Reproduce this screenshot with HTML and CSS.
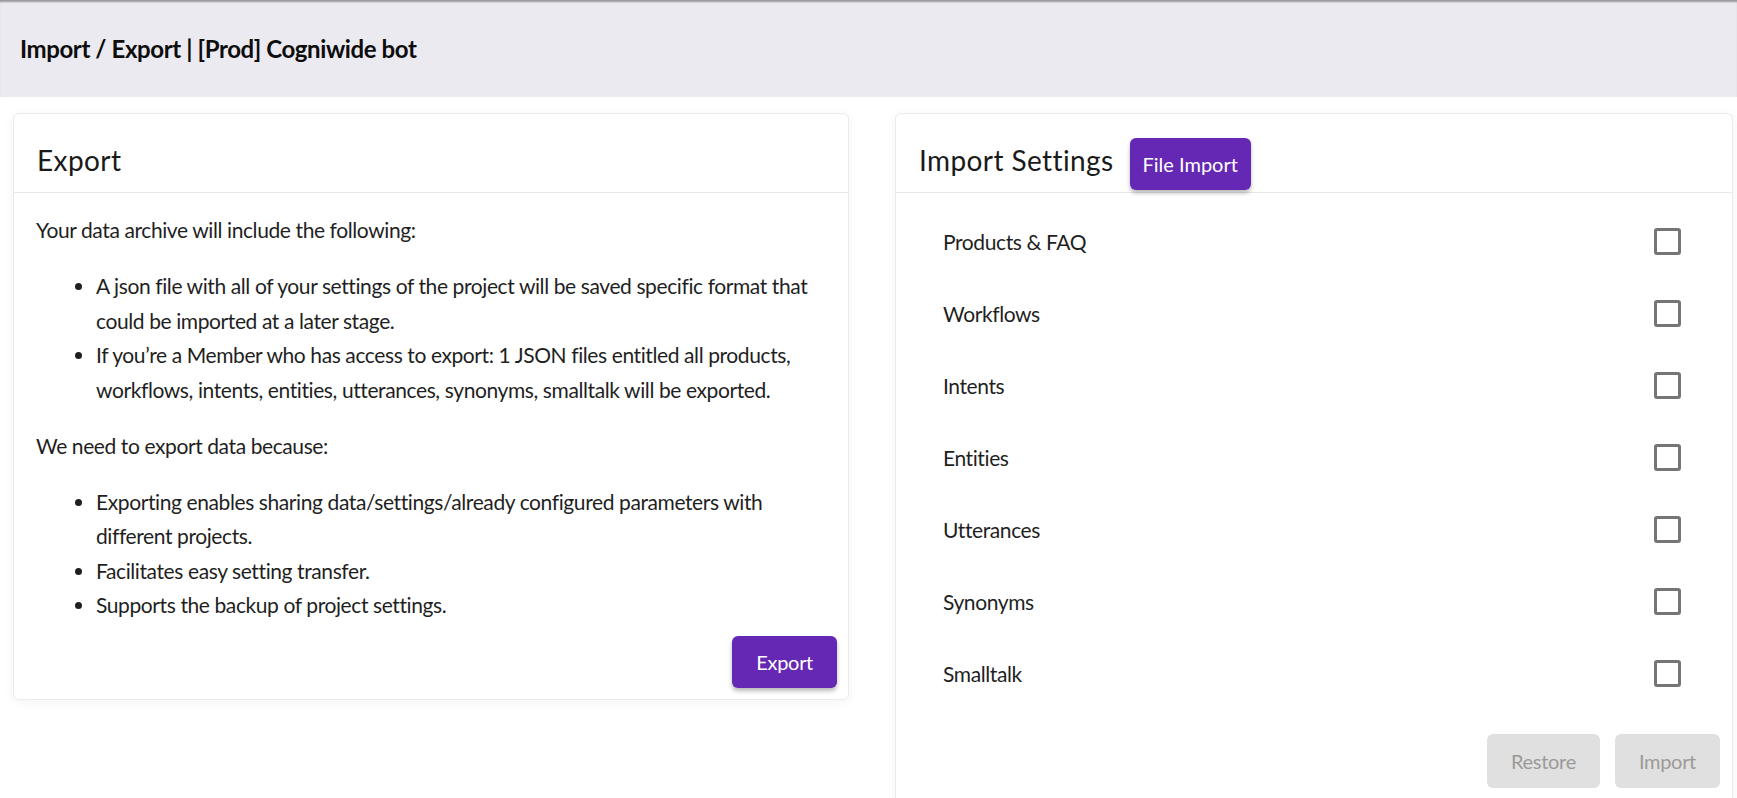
FILE: index.html
```html
<!DOCTYPE html>
<html lang="en">
<head>
<meta charset="utf-8">
<title>Import / Export</title>
<link rel="stylesheet" href="styles.css">
</head>
<body>
<header class="topbar">
  <h1 class="page-title">Import / Export | [Prod] Cogniwide bot</h1>
</header>
<main class="content">
  <section class="card card-export">
    <div class="card-header">
      <h2 class="card-title">Export</h2>
    </div>
    <div class="card-body">
      <p class="para">Your data archive will include the following:</p>
      <ul class="list">
        <li>A json file with all of your settings of the project will be saved specific format that could be imported at a later stage.</li>
        <li>If you’re a Member who has access to export: 1 JSON files entitled all products, workflows, intents, entities, utterances, synonyms, smalltalk will be exported.</li>
      </ul>
      <p class="para">We need to export data because:</p>
      <ul class="list list-last">
        <li>Exporting enables sharing data/settings/already configured parameters with different projects.</li>
        <li>Facilitates easy setting transfer.</li>
        <li>Supports the backup of project settings.</li>
      </ul>
      <div class="actions actions-export">
        <button class="btn btn-primary">Export</button>
      </div>
    </div>
  </section>
  <section class="card card-import">
    <div class="card-header">
      <h2 class="card-title">Import Settings</h2>
      <button class="btn btn-primary btn-file">File Import</button>
    </div>
    <ul class="options">
      <li class="option"><span class="option-label">Products &amp; FAQ</span><span class="checkbox"></span></li>
      <li class="option"><span class="option-label">Workflows</span><span class="checkbox"></span></li>
      <li class="option"><span class="option-label">Intents</span><span class="checkbox"></span></li>
      <li class="option"><span class="option-label">Entities</span><span class="checkbox"></span></li>
      <li class="option"><span class="option-label">Utterances</span><span class="checkbox"></span></li>
      <li class="option"><span class="option-label">Synonyms</span><span class="checkbox"></span></li>
      <li class="option"><span class="option-label">Smalltalk</span><span class="checkbox"></span></li>
    </ul>
    <div class="actions actions-import">
      <button class="btn btn-disabled">Restore</button>
      <button class="btn btn-disabled">Import</button>
    </div>
  </section>
</main>
</body>
</html>
```
FILE: styles.css
```css
* { box-sizing: border-box; }

html, body {
  margin: 0;
  padding: 0;
  background: #ffffff;
  overflow: hidden;
}

body {
  font-family: Lato, "Liberation Sans", sans-serif;
  color: #1f1f1f;
}

.topbar {
  height: 97px;
  background: #ebeaf0;
  display: flex;
  align-items: center;
  padding-left: 20px;
  box-shadow: inset 0 3px 2px -1px rgba(0, 0, 0, 0.35);
}

.page-title {
  margin: 0;
  font-size: 24px;
  font-weight: 700;
  letter-spacing: -0.4px;
  color: #0d0d0d;
}

.content {
  display: flex;
  align-items: flex-start;
  gap: 46px;
  padding: 16px 0 0 13px;
}

.card {
  background: #fff;
  border: 1px solid #ebebeb;
  border-radius: 6px;
  box-shadow: 0 2px 12px rgba(0, 0, 0, 0.05);
}

.card-export {
  width: 836px;
  height: 587px;
}

.card-import {
  width: 838px;
  height: 700px;
}

.card-header {
  height: 79px;
  display: flex;
  align-items: flex-end;
  gap: 16px;
  padding: 0 23px;
  border-bottom: 1px solid #e8e8e8;
}

.card-title {
  margin: 0 0 18px;
  font-size: 28px;
  line-height: 28px;
  font-weight: 400;
  letter-spacing: 0.4px;
  color: #1a1a1a;
}

.card-body {
  padding: 20px 11px 0 22px;
  font-size: 21px;
  letter-spacing: -0.4px;
  line-height: 34.5px;
}

.para {
  margin: 0;
}

.list {
  margin: 21.5px 0;
  padding-left: 60px;
}

.list-last {
  margin-bottom: 0;
}

.actions {
  display: flex;
  justify-content: flex-end;
}

.actions-export {
  margin-top: 13px;
}

.btn {
  font-family: Lato, "Liberation Sans", sans-serif;
  font-size: 20px;
  letter-spacing: -0.3px;
  border: none;
  border-radius: 6px;
  padding: 0 24px;
  cursor: pointer;
}

.btn-primary {
  height: 52px;
  background: #6428b4;
  color: #fff;
  box-shadow: 0 3px 4px rgba(0, 0, 0, 0.28);
}

.btn-file {
  padding: 0 13px;
  letter-spacing: 0;
  margin-bottom: 2px;
}

.btn-disabled {
  height: 54px;
  background: #e0e0e0;
  color: #9c9a98;
}

.options {
  list-style: none;
  margin: 0;
  padding: 12px 51px 0 47px;
}

.option {
  height: 72px;
  display: flex;
  align-items: center;
  justify-content: space-between;
  font-size: 21px;
  letter-spacing: -0.4px;
  color: #1f1f1f;
}

.checkbox {
  width: 27px;
  height: 27px;
  border: 3px solid #757575;
  border-radius: 3px;
}

.actions-import {
  gap: 15px;
  margin-top: 25px;
  padding-right: 12px;
}
```
